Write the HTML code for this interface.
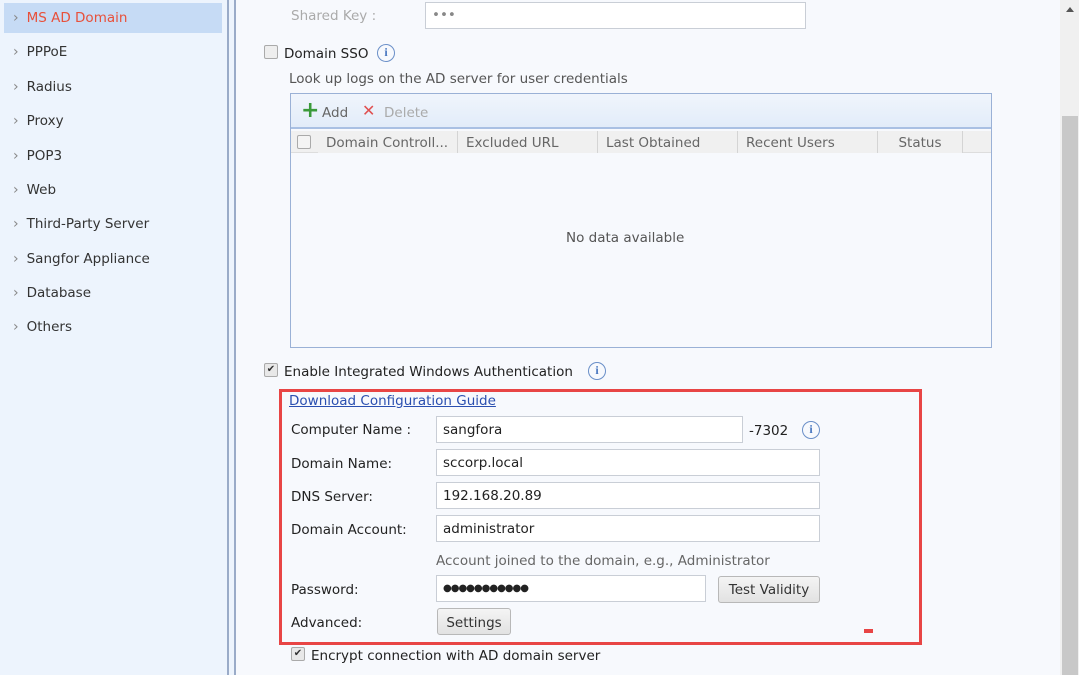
<!DOCTYPE html>
<html><head><meta charset="utf-8"><style>
*{box-sizing:border-box;margin:0;padding:0}
body{width:1079px;height:675px;overflow:hidden;position:relative;background:#f7f9fd;font-family:"DejaVu Sans","Liberation Sans",sans-serif;font-size:13.5px;color:#333}
.a{position:absolute;white-space:nowrap}
#side{left:0;top:0;width:227px;height:675px;background:#edf4fd}
.ln{top:0;width:2px;height:675px;background:#9aabc8}
.it{left:13px;color:#333;margin-top:1px}
.it:before{content:"›";color:#888;margin-right:8px;font-size:14px}
.inp{background:#fff;border:1px solid #c9ced6;height:27px;padding:5px 6px;color:#222}
.lbl{left:291px;color:#222;margin-top:1px}
.cb{width:14px;height:14px;border:1px solid #aaa;background:#eee;border-radius:2px}
.chk{width:14px;height:14px;border:1px solid #aaa;background:#e8e8e8;border-radius:2px;font-size:10px;line-height:12px;text-align:center;color:#333}
.info{width:18px;height:18px;border:1.5px solid #6a8fc8;border-radius:50%;color:#4a78c0;font-size:12px;text-align:center;line-height:15px;font-family:"Liberation Serif",serif;font-weight:bold}
.btn{background:linear-gradient(#f4f4f4,#e2e2e2);border:1px solid #b8b8b8;border-radius:3px;color:#333;text-align:center}
.th{top:131px;height:22px;border-right:1px solid #d4d4d4;background:#f0f0f0;color:#666;line-height:24px;padding-left:8px}
</style></head><body>
<div id="side" class="a"></div>
<div class="a" style="left:4px;top:3px;width:218px;height:30px;background:#c6dbf5"></div>
<div class="a it" style="top:9px;color:#e8503a">MS AD Domain</div>
<div class="a it" style="top:43px">PPPoE</div>
<div class="a it" style="top:78px">Radius</div>
<div class="a it" style="top:112px">Proxy</div>
<div class="a it" style="top:147px">POP3</div>
<div class="a it" style="top:181px">Web</div>
<div class="a it" style="top:215px">Third-Party Server</div>
<div class="a it" style="top:250px">Sangfor Appliance</div>
<div class="a it" style="top:284px">Database</div>
<div class="a it" style="top:318px">Others</div>
<div class="a ln" style="left:227px"></div>
<div class="a" style="left:229px;top:0;width:5px;height:675px;background:#edf4fd"></div>
<div class="a ln" style="left:234px"></div>
<div class="a" style="left:1060px;top:0;width:19px;height:675px;background:#f0f0f0"></div>
<div class="a" style="left:1062px;top:116px;width:16px;height:559px;background:#c8c8c8"></div>
<div class="a" style="left:1066px;top:7px;width:0;height:0;border-left:4px solid transparent;border-right:4px solid transparent;border-bottom:5px solid #555"></div>

<div class="a" style="left:291px;top:8px;color:#aaa">Shared Key :</div>
<div class="a inp" style="left:425px;top:2px;width:381px;color:#888;padding-top:4px">•••</div>
<div class="a cb" style="left:264px;top:45px"></div>
<div class="a" style="left:284px;top:46px;color:#222">Domain SSO</div>
<div class="a info" style="left:377px;top:44px">i</div>
<div class="a" style="left:289px;top:71px;color:#555">Look up logs on the AD server for user credentials</div>
<div class="a" style="left:290px;top:93px;width:702px;height:255px;border:1px solid #9ab1d6;background:#f7f9fd"></div>
<div class="a" style="left:291px;top:94px;width:700px;height:35px;background:linear-gradient(#f0f5fc,#e2ecf9);border-bottom:2px solid #a9c0e3"></div>
<div class="a" style="left:301px;top:100px;color:#3a9a3a;font-size:22px;font-weight:bold;line-height:22px">+</div>
<div class="a" style="left:322px;top:105px;color:#666">Add</div>
<div class="a" style="left:362px;top:101px;color:#e05050;font-size:16px">✕</div>
<div class="a" style="left:384px;top:105px;color:#aaa">Delete</div>
<div class="a" style="left:291px;top:131px;width:700px;height:22px;background:#f0f0f0;border-bottom:1px solid #ddd"></div>
<div class="a cb" style="left:297px;top:135px;background:#f4f4f4"></div>
<div class="a th" style="left:318px;width:140px">Domain Controll...</div>
<div class="a th" style="left:458px;width:140px">Excluded URL</div>
<div class="a th" style="left:598px;width:140px">Last Obtained</div>
<div class="a th" style="left:738px;width:140px">Recent Users</div>
<div class="a th" style="left:878px;width:85px;text-align:center;padding:0">Status</div>
<div class="a" style="left:566px;top:230px;color:#555">No data available</div>

<div class="a chk" style="left:264px;top:363px">✔</div>
<div class="a" style="left:284px;top:364px;color:#222">Enable Integrated Windows Authentication</div>
<div class="a info" style="left:588px;top:362px">i</div>
<div class="a" style="left:279px;top:389px;width:643px;height:256px;border:3px solid #e84545"></div>
<div class="a" style="left:289px;top:393px;color:#2a4fb0;text-decoration:underline">Download Configuration Guide</div>
<div class="a lbl" style="top:421px">Computer Name :</div>
<div class="a inp" style="left:436px;top:416px;width:307px">sangfora</div>
<div class="a" style="left:749px;top:423px;color:#222">-7302</div>
<div class="a info" style="left:802px;top:421px">i</div>
<div class="a lbl" style="top:455px">Domain Name:</div>
<div class="a inp" style="left:436px;top:449px;width:384px">sccorp.local</div>
<div class="a lbl" style="top:488px">DNS Server:</div>
<div class="a inp" style="left:436px;top:482px;width:384px">192.168.20.89</div>
<div class="a lbl" style="top:521px">Domain Account:</div>
<div class="a inp" style="left:436px;top:515px;width:384px">administrator</div>
<div class="a" style="left:436px;top:553px;color:#666">Account joined to the domain, e.g., Administrator</div>
<div class="a lbl" style="top:581px">Password:</div>
<div class="a inp" style="left:436px;top:575px;width:270px;font-size:10px;letter-spacing:-1px;padding-top:7px">●●●●●●●●●●●</div>
<div class="a btn" style="left:718px;top:576px;width:102px;height:27px;line-height:26px">Test Validity</div>
<div class="a lbl" style="top:614px">Advanced:</div>
<div class="a btn" style="left:437px;top:608px;width:74px;height:27px;line-height:28px">Settings</div>
<div class="a" style="left:864px;top:629px;width:9px;height:4px;background:#e84545"></div>
<div class="a chk" style="left:291px;top:647px">✔</div>
<div class="a" style="left:311px;top:648px;color:#222">Encrypt connection with AD domain server</div>
</body></html>
